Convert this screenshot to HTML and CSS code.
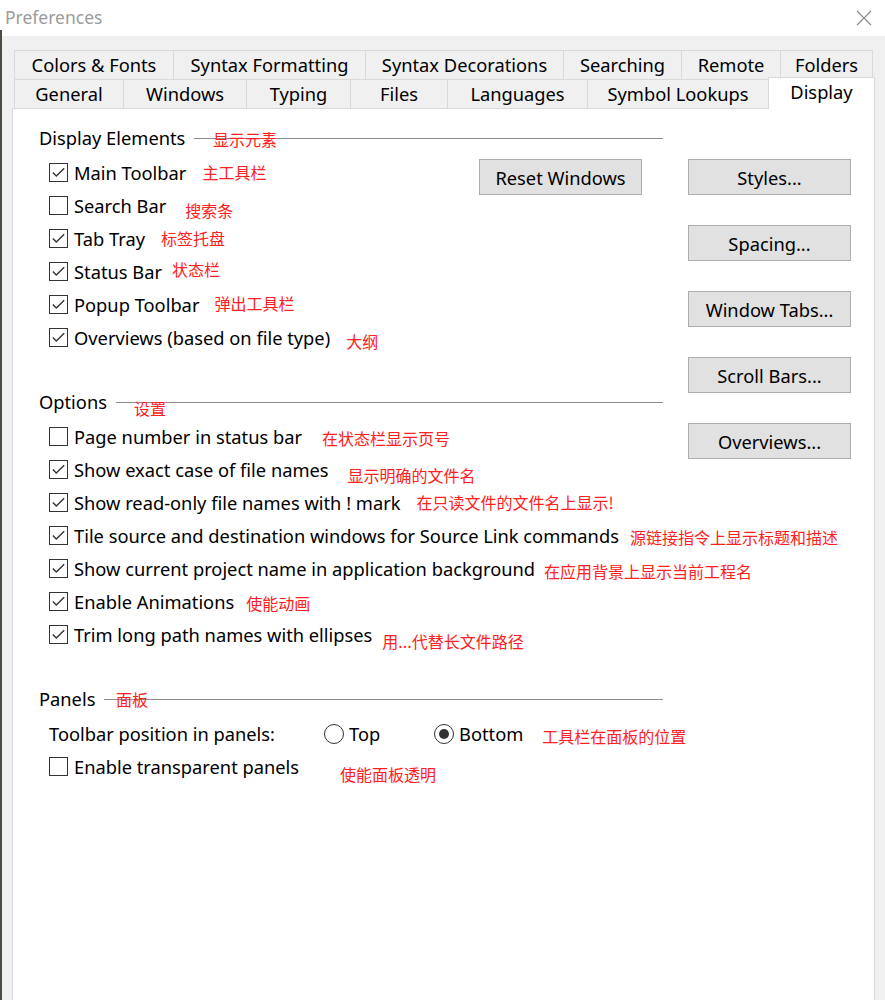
FILE: index.html
```html
<!DOCTYPE html>
<html lang="en">
<head>
<meta charset="utf-8">
<title>Preferences</title>
<link rel="stylesheet" href="styles.css">
</head>
<body>
<div class="edge"></div>
<div class="window">
  <div class="titlebar">
    <span class="title">Preferences</span>
    <svg class="close" width="16" height="16" viewBox="0 0 16 16"><path d="M1 1L15 15M15 1L1 15" stroke="#8a8a8a" stroke-width="1.1" fill="none"/></svg>
  </div>
  <div class="body">
    <div class="tabs">
      <div class="tabrow r1">
        <div class="tab">Colors &amp; Fonts</div>
        <div class="tab">Syntax Formatting</div>
        <div class="tab">Syntax Decorations</div>
        <div class="tab">Searching</div>
        <div class="tab">Remote</div>
        <div class="tab">Folders</div>
      </div>
      <div class="tabrow r2">
        <div class="tab">General</div>
        <div class="tab">Windows</div>
        <div class="tab">Typing</div>
        <div class="tab">Files</div>
        <div class="tab">Languages</div>
        <div class="tab">Symbol Lookups</div>
        <div class="tab active">Display</div>
      </div>
    </div>
    <div class="panel">
      <div class="main">
        <section class="group">
          <div class="ghead"><span>Display Elements</span><span class="rule"></span><span class="hnote h1">显示元素</span></div>
          <div class="gbody split">
            <div class="list">
              <div class="row"><span class="cb on"><svg viewBox="0 0 17 17"><path d="M2.8 8.6L6.3 12.1L14.2 4.2"/></svg></span>Main Toolbar<span class="note g16 u1">主工具栏</span></div>
              <div class="row"><span class="cb"></span>Search Bar<span class="note g19 d4">搜索条</span></div>
              <div class="row"><span class="cb on"><svg viewBox="0 0 17 17"><path d="M2.8 8.6L6.3 12.1L14.2 4.2"/></svg></span>Tab Tray<span class="note g16 u1">标签托盘</span></div>
              <div class="row"><span class="cb on"><svg viewBox="0 0 17 17"><path d="M2.8 8.6L6.3 12.1L14.2 4.2"/></svg></span>Status Bar<span class="note g10 u3">状态栏</span></div>
              <div class="row"><span class="cb on"><svg viewBox="0 0 17 17"><path d="M2.8 8.6L6.3 12.1L14.2 4.2"/></svg></span>Popup Toolbar<span class="note g15 u2">弹出工具栏</span></div>
              <div class="row"><span class="cb on"><svg viewBox="0 0 17 17"><path d="M2.8 8.6L6.3 12.1L14.2 4.2"/></svg></span>Overviews (based on file type)<span class="note g16 d3">大纲</span></div>
            </div>
            <button class="btn reset">Reset Windows</button>
          </div>
        </section>
        <section class="group">
          <div class="ghead"><span>Options</span><span class="rule"></span><span class="hnote h2">设置</span></div>
          <div class="gbody">
            <div class="row"><span class="cb"></span>Page number in status bar<span class="note g20 d1">在状态栏显示页号</span></div>
            <div class="row"><span class="cb on"><svg viewBox="0 0 17 17"><path d="M2.8 8.6L6.3 12.1L14.2 4.2"/></svg></span>Show exact case of file names<span class="note g19 d5">显示明确的文件名</span></div>
            <div class="row"><span class="cb on"><svg viewBox="0 0 17 17"><path d="M2.8 8.6L6.3 12.1L14.2 4.2"/></svg></span>Show read-only file names with ! mark<span class="note g16 u1">在只读文件的文件名上显示!</span></div>
            <div class="row"><span class="cb on"><svg viewBox="0 0 17 17"><path d="M2.8 8.6L6.3 12.1L14.2 4.2"/></svg></span>Tile source and destination windows for Source Link commands<span class="note g11 d1">源链接指令上显示标题和描述</span></div>
            <div class="row"><span class="cb on"><svg viewBox="0 0 17 17"><path d="M2.8 8.6L6.3 12.1L14.2 4.2"/></svg></span>Show current project name in application background<span class="note g9 d2">在应用背景上显示当前工程名</span></div>
            <div class="row"><span class="cb on"><svg viewBox="0 0 17 17"><path d="M2.8 8.6L6.3 12.1L14.2 4.2"/></svg></span>Enable Animations<span class="note g12 d1">使能动画</span></div>
            <div class="row"><span class="cb on"><svg viewBox="0 0 17 17"><path d="M2.8 8.6L6.3 12.1L14.2 4.2"/></svg></span>Trim long path names with ellipses<span class="note g10 d6">用...代替长文件路径</span></div>
          </div>
        </section>
        <section class="group">
          <div class="ghead"><span>Panels</span><span class="rule"></span><span class="hnote h3">面板</span></div>
          <div class="gbody">
            <div class="row"><span class="rlabel">Toolbar position in panels:</span><span class="opt first"><span class="radio"></span>Top</span><span class="opt"><span class="radio on"></span>Bottom</span><span class="note g19 d2">工具栏在面板的位置</span></div>
            <div class="row"><span class="cb"></span>Enable transparent panels<span class="note g41 d7">使能面板透明</span></div>
          </div>
        </section>
      </div>
      <div class="side">
        <button class="btn">Styles...</button>
        <button class="btn">Spacing...</button>
        <button class="btn">Window Tabs...</button>
        <button class="btn">Scroll Bars...</button>
        <button class="btn">Overviews...</button>
      </div>
    </div>
  </div>
</div>
</body>
</html>
```
FILE: styles.css
```css
html, body {
  margin: 0;
  height: 1000px;
  overflow: hidden;
}
body {
  display: flex;
  background: #f0f0f0;
  font-family: "Noto Sans", "Noto Sans CJK SC", sans-serif;
  font-size: 18.3px;
  color: #000;
}
.edge {
  width: 2px;
  flex: none;
  background: linear-gradient(#ffffff 0 30px, #4d4a44 30px);
}
.window {
  flex: 1;
  min-width: 0;
  display: flex;
  flex-direction: column;
  background: #f0f0f0;
}
.titlebar {
  box-sizing: border-box;
  height: 36px;
  flex: none;
  background: #fff;
  display: flex;
  align-items: center;
  justify-content: space-between;
  padding: 0 13px 2px 3px;
}
.title {
  color: #9b9b9b;
  font-size: 17.5px;
}
.close {
  display: block;
  margin-top: 2px;
}
.body {
  flex: 1;
  display: flex;
  flex-direction: column;
  padding-top: 14px;
}
.tabs {
  margin: 0 12px;
}
.tabrow {
  display: flex;
  height: 29px;
}
.tab {
  box-sizing: border-box;
  flex: none;
  height: 29px;
  padding-bottom: 2px;
  border-top: 1px solid #d9d9d9;
  border-left: 1px solid #d9d9d9;
  display: flex;
  align-items: center;
  justify-content: center;
  white-space: nowrap;
  background: #f0f0f0;
}
.tab:last-child {
  border-right: 1px solid #d9d9d9;
}
.r1 .tab:nth-child(1) { width: 159px; }
.r1 .tab:nth-child(2) { width: 192px; }
.r1 .tab:nth-child(3) { width: 198px; }
.r1 .tab:nth-child(4) { width: 118px; }
.r1 .tab:nth-child(5) { width: 99px; }
.r1 .tab:nth-child(6) { width: 93px; }
.r2 .tab:nth-child(1) { width: 109px; }
.r2 .tab:nth-child(2) { width: 123px; }
.r2 .tab:nth-child(3) { width: 104px; }
.r2 .tab:nth-child(4) { width: 97px; }
.r2 .tab:nth-child(5) { width: 140px; }
.r2 .tab:nth-child(6) { width: 181px; }
.r2 .tab.active {
  width: 107px;
  height: 32px;
  margin-top: -2px;
  margin-right: -2px;
  padding-bottom: 4px;
  background: #fff;
  position: relative;
  z-index: 2;
}
.panel {
  flex: 1;
  margin: 0 10px;
  background: #fff;
  border: 1px solid #d9d9d9;
  border-bottom: none;
  display: flex;
  align-items: flex-start;
}
.main {
  box-sizing: border-box;
  width: 675px;
  flex: none;
  padding: 14px 25px 0 26px;
}
.side {
  width: 163px;
  flex: none;
  display: flex;
  flex-direction: column;
  gap: 30px;
  padding-top: 50px;
}
.group + .group {
  margin-top: 33px;
}
.ghead {
  position: relative;
  height: 28px;
  display: flex;
  align-items: center;
  white-space: nowrap;
}
.rule {
  flex: 1;
  height: 1px;
  background: #8c8c8c;
  margin-left: 9px;
  margin-top: 2px;
}
.hnote {
  position: absolute;
  font-family: "Noto Sans CJK SC", sans-serif;
  font-size: 16px;
  line-height: 20px;
  color: #ff2020;
}
.h1 { left: 174px; top: 6px; }
.h2 { left: 95px; top: 11px; }
.h3 { left: 77px; top: 5px; }
.gbody {
  padding-left: 10px;
  margin-top: 5px;
}
.split {
  display: flex;
  align-items: flex-start;
}
.list {
  width: 430px;
  flex: none;
}
.row {
  height: 33px;
  display: flex;
  align-items: center;
  white-space: nowrap;
}
.cb {
  box-sizing: border-box;
  width: 19px;
  height: 19px;
  flex: none;
  border: 1px solid #333;
  background: #fff;
  margin-right: 6px;
  display: flex;
}
.cb svg {
  width: 17px;
  height: 17px;
}
.cb path {
  fill: none;
  stroke: #333;
  stroke-width: 1.4;
}
.note {
  flex: none;
  font-family: "Noto Sans CJK SC", sans-serif;
  font-size: 16px;
  line-height: 20px;
  color: #ff2020;
  position: relative;
  margin-left: 15px;
}
.g9 { margin-left: 9px; }
.g10 { margin-left: 10px; }
.g11 { margin-left: 11px; }
.g12 { margin-left: 12px; }
.g15 { margin-left: 15px; }
.g16 { margin-left: 16px; }
.g19 { margin-left: 19px; }
.g20 { margin-left: 20px; }
.g41 { margin-left: 41px; }
.u1 { top: -1px; }
.u2 { top: -2px; }
.u3 { top: -3px; }
.d1 { top: 1px; }
.d2 { top: 2px; }
.d3 { top: 3px; }
.d4 { top: 4px; }
.d5 { top: 5px; }
.d6 { top: 6px; }
.d7 { top: 7px; }
.rlabel {
  width: 275px;
  flex: none;
}
.opt {
  flex: none;
  display: flex;
  align-items: center;
}
.opt.first {
  width: 110px;
}
.radio {
  box-sizing: border-box;
  width: 20px;
  height: 20px;
  flex: none;
  border: 1px solid #333;
  border-radius: 50%;
  background: #fff;
  margin-right: 5px;
  display: flex;
  align-items: center;
  justify-content: center;
}
.radio.on::after {
  content: "";
  width: 10px;
  height: 10px;
  border-radius: 50%;
  background: #333;
}
.btn {
  box-sizing: border-box;
  width: 163px;
  height: 36px;
  padding: 0;
  background: #e1e1e1;
  border: 1px solid #adadad;
  border-radius: 0;
  font: inherit;
  color: #000;
}
.reset {
  margin-top: 3px;
}
```
